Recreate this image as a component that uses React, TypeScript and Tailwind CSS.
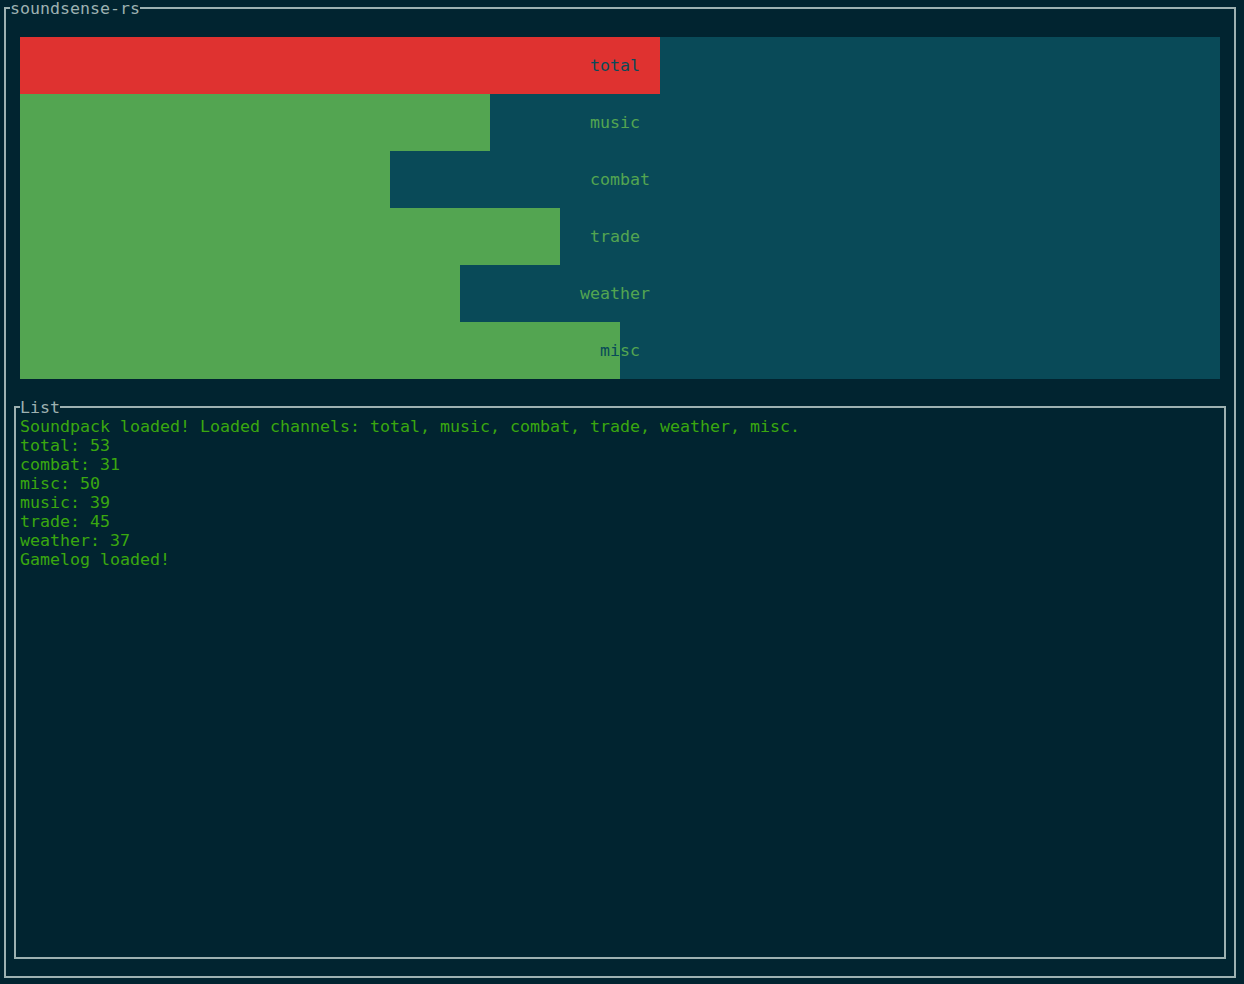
import React from "react";

const FONT = { fontFamily: '"DejaVu Sans Mono", "Liberation Mono", monospace' };

const bars = [
  { name: "total", fill: 640, color: "#df3230" },
  { name: "music", fill: 470, color: "#53a551" },
  { name: "combat", fill: 370, color: "#53a551" },
  { name: "trade", fill: 540, color: "#53a551" },
  { name: "weather", fill: 440, color: "#53a551" },
  { name: "misc", fill: 600, color: "#53a551" },
];

const TEAL = "#094a58";

function Gauge({ name, fill, color }: { name: string; fill: number; color: string }) {
  const start = Math.floor((120 - name.length) / 2) * 10;
  return (
    <div className="grid h-[57px] w-[1200px]" style={{ backgroundColor: TEAL }}>
      <div className="col-start-1 row-start-1 h-full" style={{ width: fill, backgroundColor: color }} />
      <div className="col-start-1 row-start-1 flex h-full items-center">
        <div className="flex h-[19px] leading-[19px]" style={{ paddingLeft: start }}>
          {name.split("").map((ch, i) => {
            const x = start + i * 10;
            const inFill = x < fill;
            return (
              <span
                key={i}
                className="inline-block w-[10px] text-center"
                style={{ color: inFill ? TEAL : color }}
              >
                {ch}
              </span>
            );
          })}
        </div>
      </div>
    </div>
  );
}

const lines = [
  "Soundpack loaded! Loaded channels: total, music, combat, trade, weather, misc.",
  "total: 53",
  "combat: 31",
  "misc: 50",
  "music: 39",
  "trade: 45",
  "weather: 37",
  "Gamelog loaded!",
];

export default function App() {
  return (
    <div
      className="h-[984px] w-[1244px] overflow-hidden bg-[#012430] pl-[4px] pt-[7px] text-[16.61px] leading-[19px]"
      style={FONT}
    >
      <div className="relative flex h-[971px] w-[1232px] flex-col border-2 border-[#9db1b1]">
        <div className="absolute left-[4px] top-[-10px] h-[19px] bg-[#012430] text-[#9db1b1] whitespace-pre">
          soundsense-rs
        </div>
        <div className="flex flex-col pl-[14px] pt-[28px]">
          {bars.map((b) => (
            <Gauge key={b.name} {...b} />
          ))}
        </div>
        <div className="relative ml-[8px] mt-[27px] h-[553px] w-[1212px] border-2 border-[#9db1b1] pl-[4px] pt-[9px]">
          <div className="absolute left-[4px] top-[-10px] h-[19px] bg-[#012430] text-[#9db1b1]">List</div>
          {lines.map((l, i) => (
            <div key={i} className="h-[19px] whitespace-pre text-[#3aa80f]">
              {l}
            </div>
          ))}
        </div>
      </div>
    </div>
  );
}
